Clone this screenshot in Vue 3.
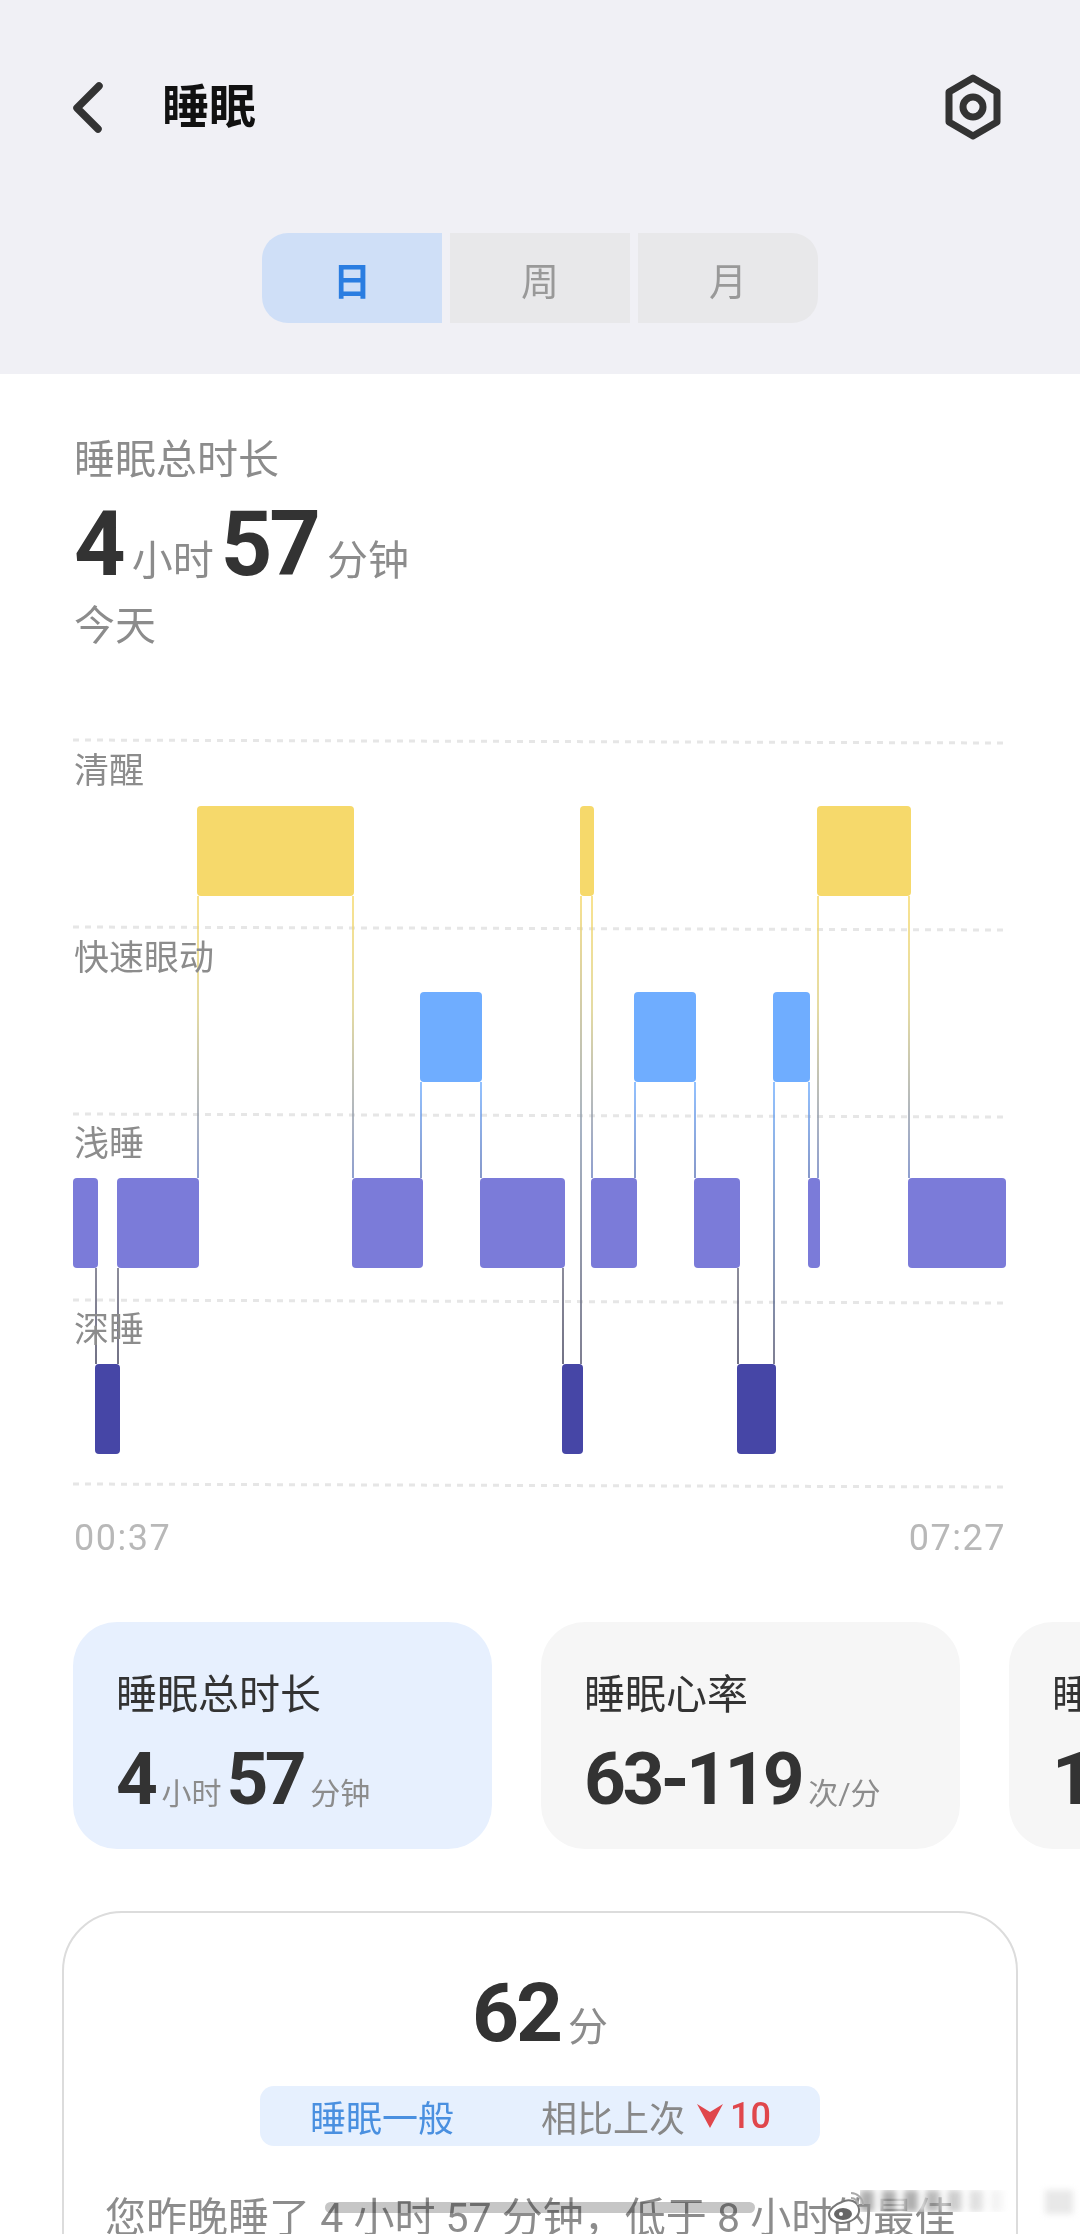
<script setup>
const grid = [740, 927, 1114, 1300, 1484]
const rows = { wake: 806, rem: 992, light: 1178, deep: 1364 }
const colors = { wake: '#f6d96b', rem: '#6fadff', light: '#7b7bd9', deep: '#4646a6' }
const bars = [
  ['wake', 197, 354], ['wake', 580, 594], ['wake', 817, 911],
  ['rem', 420, 482], ['rem', 634, 696], ['rem', 773, 810],
  ['light', 73, 98], ['light', 117, 199], ['light', 352, 423], ['light', 480, 565],
  ['light', 591, 637], ['light', 694, 740], ['light', 808, 820], ['light', 908, 1006],
  ['deep', 95, 120], ['deep', 562, 583], ['deep', 737, 776]
]
const links = [
  [96, 1268, 1364, 'd'], [118, 1268, 1364, 'd'], [563, 1268, 1364, 'd'], [738, 1268, 1364, 'd'],
  [198, 896, 1178, 'y'], [353, 896, 1178, 'y'], [592, 896, 1178, 'y'], [818, 896, 1178, 'y'], [909, 896, 1178, 'y'],
  [581, 896, 1364, 'yd'], [421, 1082, 1178, 'b'], [481, 1082, 1178, 'b'], [635, 1082, 1178, 'b'], [695, 1082, 1178, 'b'],
  [809, 1082, 1178, 'b'], [774, 1082, 1364, 'bd']
]
const labels = [['清醒', 771], ['快速眼动', 958], ['浅睡', 1144], ['深睡', 1330]]
const top = 700
</script>

<template>
  <div class="page">
    <header class="head">
      <div class="nav">
        <svg class="back" width="40" height="60" viewBox="0 0 40 60">
          <path d="M33 9 L11 31 L32 52" fill="none" stroke="#333" stroke-width="7.5" stroke-linecap="round" stroke-linejoin="round" />
        </svg>
        <h1 class="title">睡眠</h1>
        <svg class="gear" width="60" height="68" viewBox="0 0 60 68">
          <path d="M30 5 L54 19 V49 L30 63 L6 49 V19 Z" fill="none" stroke="#333" stroke-width="7" stroke-linejoin="round" />
          <circle cx="30" cy="34" r="10" fill="none" stroke="#333" stroke-width="7" />
        </svg>
      </div>
      <div class="tabs">
        <div class="tab on">日</div>
        <div class="tab">周</div>
        <div class="tab">月</div>
      </div>
    </header>

    <main class="body">
      <section class="sum">
        <div class="cap">睡眠总时长</div>
        <div class="big">
          <b>4</b><span class="u">小时</span><b>57</b><span class="u">分钟</span>
        </div>
        <div class="cap">今天</div>
      </section>

      <svg class="chart" width="1080" height="880" :viewBox="`0 ${top} 1080 880`">
        <defs>
          <linearGradient id="y" x1="0" y1="0" x2="0" y2="1">
            <stop offset="0" stop-color="#f6d96b" /><stop offset="0.4" stop-color="#dccf85" /><stop offset="1" stop-color="#6a7fc0" />
          </linearGradient>
          <linearGradient id="b" x1="0" y1="0" x2="0" y2="1">
            <stop offset="0" stop-color="#6fadff" /><stop offset="1" stop-color="#5f76b8" />
          </linearGradient>
          <linearGradient id="d" x1="0" y1="0" x2="0" y2="1">
            <stop offset="0" stop-color="#66667a" /><stop offset="1" stop-color="#44445e" />
          </linearGradient>
          <linearGradient id="yd" x1="0" y1="0" x2="0" y2="1">
            <stop offset="0" stop-color="#f6d96b" /><stop offset="0.5" stop-color="#8a9ab0" /><stop offset="1" stop-color="#55556e" />
          </linearGradient>
          <linearGradient id="bd" x1="0" y1="0" x2="0" y2="1">
            <stop offset="0" stop-color="#6fadff" /><stop offset="1" stop-color="#55556e" />
          </linearGradient>
        </defs>
        <line v-for="g in grid" :key="g" x1="73" :y1="g" x2="1005" :y2="g + 3" stroke="#e6e6e6" stroke-width="3" stroke-dasharray="6 6" />
        <rect v-for="l in links" :key="l[0] + '-' + l[1]" :x="l[0] - 0.75" :y="l[1]" width="1.5" :height="l[2] - l[1]" :fill="`url(#${l[3]})`" />
        <rect v-for="b in bars" :key="b[0] + b[1]" :x="b[1]" :y="rows[b[0]]" :width="b[2] - b[1]" height="90" rx="4" :fill="colors[b[0]]" />
        <text v-for="l in labels" :key="l[0]" class="lab" x="74" :y="l[1] + 12">{{ l[0] }}</text>
        <text class="time" x="74" y="1550">00:37</text>
        <text class="time" x="1006" y="1550" text-anchor="end">07:27</text>
      </svg>

      <div class="cards">
        <div class="card act">
          <div class="c-t">睡眠总时长</div>
          <div class="c-v"><b>4</b><span>小时</span><b>57</b><span>分钟</span></div>
        </div>
        <div class="card">
          <div class="c-t">睡眠心率</div>
          <div class="c-v"><b>63-119</b><span>次/分</span></div>
        </div>
        <div class="card">
          <div class="c-t">睡眠血氧</div>
          <div class="c-v"><b>1</b></div>
        </div>
      </div>

      <section class="score">
        <div class="pts"><b>62</b><span>分</span></div>
        <div class="pill">
          <span class="lvl">睡眠一般</span>
          <span class="cmp">相比上次</span>
          <svg class="tri" width="26" height="24" viewBox="0 0 26 24"><path d="M0 0 L13 8 L26 0 L13 24 Z" fill="#e0474c" /></svg>
          <span class="dn">10</span>
        </div>
        <p class="txt">您昨晚睡了 4 小时 57 分钟，低于 8 小时的最佳</p>
      </section>
    </main>

    <div class="gesture"></div>
    <div class="smudge"></div>
    <div class="smudge far"></div>
    <svg class="mark" width="38" height="36" viewBox="0 0 38 36">
      <path d="M15 12 C22 8 31 11 32 19 C33 27 24 33 14 33 C7 33 2 29 2 24 C2 20 8 14 15 12 Z" fill="#fff" stroke="#777" stroke-width="2" />
      <ellipse cx="16" cy="24" rx="9" ry="6" fill="#666" />
      <circle cx="14" cy="24" r="2" fill="#fff" />
      <path d="M24 3 C30 3 36 8 36 15 M24 8 C28 8 31 11 31 15" fill="none" stroke="#aaa" stroke-width="2" />
    </svg>
  </div>
</template>

<style>
html, body { margin: 0; background: #fff; }
</style>

<style scoped>
.page {
  position: relative;
  width: 1080px;
  height: 2234px;
  overflow: hidden;
  font-family: Roboto, "Noto Sans CJK SC", sans-serif;
  background: #fff;
}
.head {
  height: 374px;
  background: #f0f0f5;
  box-sizing: border-box;
  padding-top: 73px;
}
.nav {
  display: flex;
  align-items: center;
  height: 68px;
  padding: 0 77px 0 66px;
}
.title {
  margin: 0 0 0 56px;
  flex: 1;
  font-size: 47px;
  font-weight: 700;
  color: #111;
  line-height: 68px;
}
.tabs {
  display: flex;
  gap: 8px;
  width: 556px;
  height: 90px;
  margin: 92px auto 0;
  border-radius: 26px;
  overflow: hidden;
}
.tab {
  flex: 1;
  background: #e8e8ea;
  color: #999;
  font-size: 38px;
  display: flex;
  align-items: center;
  justify-content: center;
}
.tab.on {
  background: #cfdff7;
  color: #2a7de1;
  font-weight: 700;
}
.sum {
  padding: 59px 74px 0;
  height: 326px;
  box-sizing: border-box;
}
.cap {
  font-size: 41px;
  line-height: 54px;
  color: #8c8c8c;
}
.big {
  display: flex;
  align-items: baseline;
  height: 112px;
  line-height: 116px;
  color: #333;
}
.big b {
  font-size: 90px;
  letter-spacing: -3px;
}
.big .u {
  font-size: 41px;
  color: #8c8c8c;
  margin: 0 7px 0 9px;
}
.chart {
  display: block;
}
.lab {
  font-size: 35px;
  fill: #8c8c8c;
}
.time {
  font-size: 36px;
  letter-spacing: 1.5px;
  fill: #b8b8b8;
}
.cards {
  display: flex;
  gap: 49px;
  padding-left: 73px;
  margin-top: 42px;
}
.card {
  flex: 0 0 419px;
  height: 227px;
  box-sizing: border-box;
  padding: 46px 43px 0;
  border-radius: 44px;
  background: #f6f6f6;
}
.card.act {
  background: #e7f0fe;
}
.c-t {
  font-size: 41px;
  line-height: 54px;
  color: #333;
}
.c-v {
  display: flex;
  align-items: baseline;
  margin-top: 12px;
  line-height: 90px;
  color: #333;
}
.c-v b {
  font-size: 73px;
  letter-spacing: -3.5px;
}
.c-v span {
  font-size: 30px;
  color: #8c8c8c;
  margin: 0 5px 0 7px;
}
.score {
  box-sizing: border-box;
  margin: 62px 62px 0;
  height: 400px;
  padding-top: 50px;
  border: 2px solid #dcdcdc;
  border-radius: 60px;
  display: flex;
  flex-direction: column;
  align-items: center;
}
.pts {
  display: flex;
  align-items: baseline;
  line-height: 100px;
  color: #333;
}
.pts b {
  font-size: 82px;
  letter-spacing: -3px;
}
.pts span {
  font-size: 40px;
  color: #8c8c8c;
  margin-left: 8px;
}
.pill {
  box-sizing: border-box;
  width: 560px;
  height: 60px;
  margin-top: 8px;
  padding-left: 50px;
  background: #e6f0fe;
  border-radius: 14px;
  display: flex;
  align-items: center;
  font-size: 36px;
}
.lvl { color: #4a90e0; }
.cmp { color: #888; margin-left: 87px; }
.tri { margin: 0 7px 0 12px; }
.dn { color: #e0474c; font-weight: 500; }
.txt {
  align-self: flex-start;
  margin: 45px 0 0 41px;
  font-size: 41px;
  line-height: 54px;
  color: #8c8c8c;
  white-space: nowrap;
}
.gesture {
  position: absolute;
  left: 325px;
  top: 2202px;
  width: 430px;
  height: 11px;
  border-radius: 6px;
  background: #c6c6c6;
  mix-blend-mode: multiply;
}
.smudge {
  position: absolute;
  left: 860px;
  top: 2190px;
  width: 150px;
  height: 22px;
  filter: blur(3px);
  background: repeating-linear-gradient(90deg, rgba(140, 140, 140, .7) 0 14px, rgba(255, 255, 255, .8) 14px 22px);
  -webkit-mask-image: linear-gradient(90deg, #000 40%, transparent);
  mask-image: linear-gradient(90deg, #000 40%, transparent);
}
.smudge.far {
  left: 1045px;
  width: 28px;
  height: 24px;
  background: rgba(190, 190, 190, .35);
  -webkit-mask-image: none;
  mask-image: none;
}
.mark {
  position: absolute;
  left: 827px;
  top: 2190px;
}
</style>
